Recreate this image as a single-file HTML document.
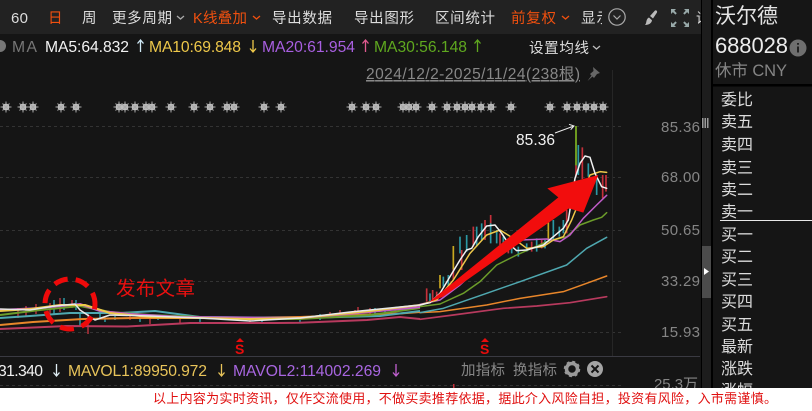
<!DOCTYPE html>
<html lang="zh"><head><meta charset="utf-8"><title>沃尔德 688028</title>
<style>
html,body{margin:0;padding:0;background:#151515;width:812px;height:411px;overflow:hidden}
svg{display:block;font-family:"Liberation Sans","Noto Sans CJK SC",sans-serif}
</style></head><body>
<svg width="812" height="411" viewBox="0 0 812 411" xmlns="http://www.w3.org/2000/svg">
<defs>
<g id="s"><circle r="3.400" fill="#d0d0d0"/><path d="M-5.500 0h11M0-5.500v11M-3.500-3.500l7 7M3.500-3.500l-7 7" stroke="#aaa" stroke-width="1"/></g>
<clipPath id="tb"><rect x="0" y="0" width="602" height="34"/></clipPath>
<clipPath id="pl"><rect x="0" y="0" width="701" height="388"/></clipPath>
</defs>
<rect width="812" height="411" fill="#151515"/>
<rect width="701" height="34" fill="#222"/>
<rect x="701" width="1" height="388" fill="#000"/>
<rect x="702" width="9" height="388" fill="#1d1d1d"/>
<rect x="711" width="2" height="388" fill="#000"/>
<rect x="713" width="99" height="85" fill="#161616"/>
<rect x="711" y="84" width="101" height="2.500" fill="#000"/>
<g font-size="14.500" fill="#ddd">
<text x="11" y="23" textLength="17" font-size="15">60</text>
<text x="48" y="23" fill="#f0500f">日</text>
<text x="82" y="23">周</text>
<text x="112" y="23" textLength="60">更多周期</text>
<text x="193" y="23" textLength="54" fill="#f0500f">K线叠加</text>
<text x="272" y="23" textLength="60">导出数据</text>
<text x="354" y="23" textLength="60">导出图形</text>
<text x="435" y="23" textLength="60">区间统计</text>
<text x="511" y="23" textLength="45" fill="#f0500f">前复权</text>
<g clip-path="url(#tb)"><text x="581" y="23" textLength="30">显示</text></g>
</g>
<path d="M177 16l3.500 3 3.500-3" fill="none" stroke="#aaa" stroke-width="1.300"/>
<path d="M253 16l3.500 3 3.500-3" fill="none" stroke="#f0500f" stroke-width="1.300"/>
<path d="M562 16l3.500 3 3.500-3" fill="none" stroke="#f0500f" stroke-width="1.300"/>
<circle cx="617" cy="17" r="8.200" fill="none" stroke="#aaa" stroke-width="1.200"/>
<path d="M613.500 15.500l3.500 3.500 3.500-3.500" fill="none" stroke="#aaa" stroke-width="1.200"/>
<path d="M655 10.500c1.500-.5 2.500.5 2 2l-4 6-3-2.500zM649 17.500l3 2.800c-.5 3-3 4.700-7 4.700 1.500-1.500 1-3.500 2-5.500.5-1 1-1.600 2-2z" fill="#bbb"/>
<path d="M671 9h5l-1.700 1.700 2.500 2.500-1.400 1.400-2.500-2.500L671 14zM689 9h-5l1.700 1.700-2.500 2.500 1.400 1.400 2.500-2.500L689 14zM671 27h5l-1.700-1.700 2.500-2.500-1.400-1.400-2.500 2.500L671 22zM689 27h-5l1.700-1.700-2.500-2.500 1.400-1.400 2.500 2.500L689 22z" fill="#9aa"/>
<text x="696" y="23" font-size="14" fill="#ddd" clip-path="url(#pl)">设</text>

<!-- MA row -->
<circle cx="0" cy="46" r="6" fill="#777"/>
<g font-size="15.700">
<text x="12" y="52" fill="#777" textLength="25">MA</text>
<text x="45" y="52" fill="#f2f2f2" textLength="84">MA5:64.832</text>
<text x="149" y="52" fill="#eec84a" textLength="92">MA10:69.848</text>
<text x="262" y="52" fill="#a85fe0" textLength="93">MA20:61.954</text>
<text x="374" y="52" fill="#5fa81f" textLength="93">MA30:56.148</text>
</g>
<g fill="none" stroke-width="1.300">
<path d="M140.500 52V40M137.500 43.500l3-3.500 3 3.500" stroke="#cfe8f5"/>
<path d="M253 40v12M250 48.500l3 3.500 3-3.500" stroke="#eec84a"/>
<path d="M365.500 52V40M362.500 43.500l3-3.500 3 3.500" stroke="#e05a90"/>
<path d="M477.500 52V40M474.500 43.500l3-3.500 3 3.500" stroke="#5fa81f"/>
<path d="M593 46l3.500 3 3.500-3" stroke="#bbb"/>
</g>
<text x="529" y="53" font-size="14.500" fill="#ddd" textLength="60">设置均线</text>
<text x="366" y="79" font-size="15.500" fill="#888" textLength="214" text-decoration="underline">2024/12/2-2025/11/24(238根)</text>
<path d="M593 67l7 6-3 1-3 4-1.500-1.500-5 4.500 4-5.500-1.500-1.500 3.500-3z" fill="#666"/>

<!-- markers -->
<g>
<use href="#s" x="6" y="107"/><use href="#s" x="23" y="107"/><use href="#s" x="33" y="107"/><use href="#s" x="61" y="107"/><use href="#s" x="76" y="107"/><use href="#s" x="119" y="107"/><use href="#s" x="125" y="107"/><use href="#s" x="135" y="107"/><use href="#s" x="146" y="107"/><use href="#s" x="152" y="107"/><use href="#s" x="171" y="107"/><use href="#s" x="194" y="107"/><use href="#s" x="210" y="107"/><use href="#s" x="227" y="107"/><use href="#s" x="234" y="107"/><use href="#s" x="264" y="107"/><use href="#s" x="281" y="107"/><use href="#s" x="352" y="107"/><use href="#s" x="366" y="107"/><use href="#s" x="376" y="107"/><use href="#s" x="403" y="107"/><use href="#s" x="409" y="107"/><use href="#s" x="416" y="107"/><use href="#s" x="432" y="107"/><use href="#s" x="447" y="107"/><use href="#s" x="457" y="107"/><use href="#s" x="465" y="107"/><use href="#s" x="472" y="107"/><use href="#s" x="481" y="107"/><use href="#s" x="491" y="107"/><use href="#s" x="511" y="107"/><use href="#s" x="550" y="107"/><use href="#s" x="567" y="107"/><use href="#s" x="577" y="107"/><use href="#s" x="586" y="107"/><use href="#s" x="594" y="107"/><use href="#s" x="603" y="107"/>
</g>

<!-- grid -->
<g stroke="#333" stroke-width="1" stroke-dasharray="3 3">
<path d="M0 126.500H622M0 177.500H622M0 230.500H622M0 281.500H622M0 332.500H622M0 385.500H622"/>
</g>
<path d="M612.500 70V356" stroke="#262626"/>
<path d="M0 356.500H700" stroke="#3a3a42"/>

<!-- left low candles -->
<g stroke-width="1.500">
<path d="M18 308v10M26 306v10M36 304v10M50 303v12M60 298v14M72 300v8M88 312v22M130 314v6M150 318v6M180 318v5M250 318v6M330 312v6M340 310v8M355 310v7M370 308v8M358 307v9" stroke="#b5323c"/>
<path d="M54 300v14M64 298v12M76 300v10M80 312v14M100 312v6M105 318v4M115 316v4M140 316v6M158 316v4M200 317v5M262 318v5M300 318v5M320 314v6M345 312v5M375 308v8M385 308v6" stroke="#2b98a4"/>
</g>

<!-- main candles (coordinates from zoom) -->
<g transform="translate(420 120) scale(.33333)">
<g stroke-width="5">
<path d="M20 505v40M38 510v30M50 515v25M100 430v50M125 390v60M160 320v60M195 300v60M212 285v70M240 340v35M265 380v20M335 365v30M365 360v25M440 270v70M468 100v70M487 82v95M548 165v70M558 165v50" stroke="#c5303a"/>
<path d="M30 520v25M70 470v30M85 465v40M120 350v50M140 345v50M170 320v60M185 310v50M212 310v60M230 330v40M250 350v40M275 375v25M295 380v30M320 370v25M350 355v40M375 360v25M400 300v60M418 320v30M430 300v40M475 75v90M505 130v40M530 170v55" stroke="#2b98a4"/>
<path d="M60 465v40M100 378v70M385 300v60" stroke="#c9a820"/>
</g>
<rect x="465" y="18" width="6" height="118" fill="#6e9a1f"/>
<g fill="none" stroke-width="4.500" stroke-linejoin="round" stroke-linecap="round">
<polyline stroke="#b83a5e" stroke-width="5" points="0,598 100,585 250,565 350,558 450,548 560,530"/>
<polyline stroke="#e8862a" points="0,578 60,575 200,555 300,535 430,515 500,490 560,468"/>
<polyline stroke="#4fa8b0" points="0,578 70,565 200,520 300,485 440,435 500,385 560,352"/>
<polyline stroke="#6c9c2a" points="0,560 60,552 130,520 180,485 230,435 290,405 380,365 440,350 480,315 520,300 545,292 560,278"/>
<polyline stroke="#c05cc8" points="0,553 60,540 120,495 180,440 230,400 270,375 300,360 380,357 420,365 450,345 490,295 530,255 560,226"/>
<polyline stroke="#eec84a" points="0,555 50,540 100,480 150,400 200,345 240,330 280,355 320,385 370,380 400,360 430,350 455,300 510,165 540,155 560,157"/>
<polyline stroke="#f2f2f2" points="0,555 30,548 60,520 90,470 120,420 140,390 155,385 175,350 200,318 225,315 245,340 265,370 290,392 320,390 370,375 400,350 430,325 445,300 465,175 480,130 495,108 510,112 525,160 545,200 560,205"/>
</g>
<polygon fill="#f20d0d" points="25,548 415,232 382,205 535,165 490,278 447,265 70,530"/>
<path d="M405 39L462 18M447 13l15 5-10 11" fill="none" stroke="#eee" stroke-width="3"/>
</g>

<!-- low MA lines left -->
<g fill="none" stroke-width="2" stroke-linejoin="round">
<polyline stroke="#b83a5e" points="0,329 67,326 127,326.500 190,323 277,323 300,322.700 367,320 400,317 420,319"/>
<polyline stroke="#e8862a" points="0,325 33,322 83,319 133,318 233,318 300,317 400,313.500 420,312"/>
<polyline stroke="#4fa8b0" points="0,318 30,316 70,313 120,313 155,311 200,317 300,318 380,316 420,311"/>
<polyline stroke="#6c9c2a" points="0,315 40,310 80,306 110,312 150,315 250,319 300,319 370,315 420,308"/>
<polyline stroke="#c05cc8" points="0,310 40,308 80,304 100,311 130,314 180,317 300,318 370,312 420,307"/>
<polyline stroke="#eec84a" points="0,311 30,309 60,305 85,305 110,313 150,317 250,319 300,318 370,311 420,305"/>
<polyline stroke="#e8e8e8" stroke-width="1.500" points="0,309 30,310 55,306 75,304 80,310 95,320 110,315 150,316 200,318 250,321 300,318 350,312 420,305"/>
</g>

<!-- circle annotation -->
<circle cx="70" cy="304" r="25" fill="none" stroke="#ee0a0a" stroke-width="5" stroke-dasharray="14 8" transform="rotate(-20 70 304)"/>
<text x="116" y="295" font-size="19.500" fill="#e81010" textLength="79">发布文章</text>
<text x="516" y="145" font-size="15.500" fill="#f2f2f2" textLength="39">85.36</text>

<!-- S markers -->
<g fill="#e80c0c">
<path d="M240 338l4 4h-8z"/><text x="235" y="354" font-size="14" font-weight="bold">S</text>
<path d="M485 338l4 4h-8z"/><text x="480" y="354" font-size="14" font-weight="bold">S</text>
</g>

<!-- axis labels -->
<g font-size="15" fill="#858585">
<text x="661" y="132" textLength="39">85.36</text>
<text x="661" y="182" textLength="39">68.00</text>
<text x="661" y="235" textLength="39">50.65</text>
<text x="661" y="286" textLength="39">33.29</text>
<text x="661" y="337" textLength="39">15.93</text>
<text x="654" y="389" textLength="44">25.3万</text>
</g>

<!-- volume row -->
<g font-size="15.700">
<text x="-2" y="376" fill="#f2f2f2" textLength="45">31.340</text>
<text x="68" y="376" fill="#e8c45a" textLength="139">MAVOL1:89950.972</text>
<text x="233" y="376" fill="#a866e0" textLength="148">MAVOL2:114002.269</text>
</g>
<g fill="none" stroke-width="1.300">
<path d="M56.500 364v12M53.500 372.500l3 3.500 3-3.500" stroke="#dfeef5"/>
<path d="M221.500 364v12M218.500 372.500l3 3.500 3-3.500" stroke="#e8c45a"/>
<path d="M396 364v12M393 372.500l3 3.500 3-3.500" stroke="#c060d0"/>
</g>
<text x="461" y="375" font-size="14.500" fill="#888" textLength="44">加指标</text>
<text x="513" y="375" font-size="14.500" fill="#888" textLength="44">换指标</text>
<circle cx="572" cy="369" r="5.500" fill="none" stroke="#9a9a9a" stroke-width="3.500"/>
<circle cx="572" cy="369" r="7" fill="none" stroke="#9a9a9a" stroke-width="2.500" stroke-dasharray="2.800 2.700"/>
<circle cx="595" cy="369" r="8" fill="#a5a5a5"/>
<path d="M591.500 365.500l7 7M598.500 365.500l-7 7" stroke="#151515" stroke-width="2"/>
<rect x="453" y="384" width="1.500" height="4" fill="#c5303a"/>

<!-- sidebar handles -->
<g fill="#9a9a9a"><rect x="702" y="118" width="1.500" height="10"/><rect x="704.500" y="118" width="1.500" height="10"/><rect x="707" y="118" width="1.500" height="10"/></g>
<rect x="702" y="246" width="9" height="52" fill="#4c4c4c"/>
<path d="M704 268l5 3.500-5 3.500z" fill="#fff"/>

<!-- right header -->
<text x="715" y="23" font-size="21" fill="#e4e4e4" textLength="63">沃尔德</text>
<text x="715" y="53" font-size="22" fill="#ececec" textLength="73">688028</text>
<circle cx="798" cy="48" r="8.500" fill="#6f6f6f"/>
<path d="M798 46.500v6M798 43v1.800" stroke="#222" stroke-width="2"/>
<text x="715" y="76" font-size="16.500" fill="#858585" textLength="72">休市 CNY</text>

<!-- right list -->
<g font-size="16" fill="#dcdcdc">
<text x="721" y="105">委比</text>
<text x="721" y="127">卖五</text>
<text x="721" y="150">卖四</text>
<text x="721" y="173">卖三</text>
<text x="721" y="195">卖二</text>
<text x="721" y="217">卖一</text>
<text x="721" y="240">买一</text>
<text x="721" y="262">买二</text>
<text x="721" y="285">买三</text>
<text x="721" y="307">买四</text>
<text x="721" y="330">买五</text>
<text x="721" y="352">最新</text>
<text x="721" y="374">涨跌</text>
<text x="721" y="396">涨幅</text>
</g>
<rect x="720" y="220" width="92" height="1" fill="#e8e8e8"/>
<rect x="701" y="0" width="1" height="388" fill="#000"/>

<!-- footer -->
<rect x="0" y="388" width="812" height="23" fill="#fff"/>
<text x="153" y="403" font-size="13" fill="#e01010" textLength="624">以上内容为实时资讯，仅作交流使用，不做买卖推荐依据，据此介入风险自担，投资有风险，入市需谨慎。</text>
</svg>
</body></html>
